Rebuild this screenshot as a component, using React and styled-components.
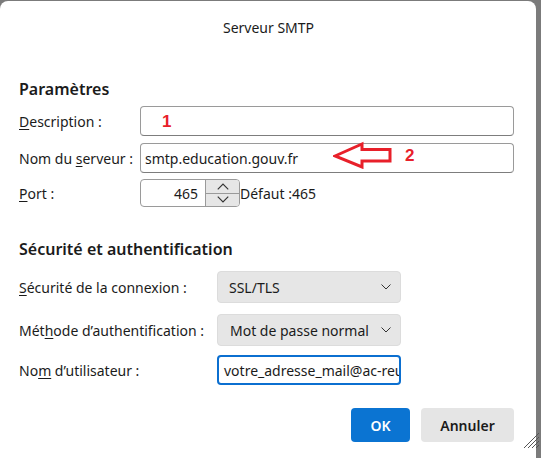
import React from "react";
import styled, { createGlobalStyle } from "styled-components";

const Global = createGlobalStyle`
  html, body { margin: 0; padding: 0; }
  body {
    width: 541px; height: 458px; overflow: hidden;
    background: #7b7b7b;
    font-family: "Noto Sans", "Segoe UI", "Liberation Sans", sans-serif;
    color: #1b1b1b;
  }
`;

const Screen = styled.div`
  display: flex;
  width: 541px;
  height: 458px;
  padding-top: 1px;
  box-sizing: border-box;
`;

const Dialog = styled.div`
  position: relative;
  width: 536px;
  height: 470px;
  background: #fff;
  border-radius: 8px;
  box-sizing: border-box;
  padding: 0 22px 0 19px;
  display: flex;
  flex-direction: column;
`;

const Title = styled.div`
  height: 52px;
  display: flex;
  align-items: center;
  justify-content: center;
  font-size: 14px;
  padding-left: 4px;
`;

const Heading = styled.div`
  font-size: 16px;
  font-weight: 600;
  margin-top: ${(p) => p.$top}px;
  height: 24px;
  line-height: 24px;
`;

const Row = styled.div`
  display: flex;
  align-items: center;
  margin-top: ${(p) => p.$top}px;
  position: relative;
`;

const Label = styled.label`
  width: ${(p) => p.$w}px;
  flex: none;
  font-size: 14px;
  white-space: nowrap;
  u { text-decoration: underline; text-underline-offset: 2px; }
`;

const TextInput = styled.div`
  box-sizing: border-box;
  width: ${(p) => p.$w}px;
  height: 30px;
  border: 1px solid #9a9a9a;
  border-bottom-color: #7d7d7d;
  border-radius: 4px;
  display: flex;
  align-items: center;
  padding-left: 4px;
  font-size: 14px;
  overflow: hidden;
  white-space: nowrap;
`;

const FocusInput = styled(TextInput)`
  border: 2px solid #0b6fd0;
  padding-left: 5px;
`;

const Spin = styled.div`
  box-sizing: border-box;
  width: 100px;
  height: 28px;
  border: 1px solid #9a9a9a;
  border-radius: 4px;
  display: flex;
  overflow: hidden;
`;

const SpinValue = styled.div`
  flex: 1;
  display: flex;
  align-items: center;
  justify-content: flex-end;
  padding-right: 7px;
  font-size: 14px;
`;

const SpinButtons = styled.div`
  width: 33px;
  display: flex;
  flex-direction: column;
  border-left: 1px solid #9a9a9a;
`;

const SpinBtn = styled.div`
  flex: 1;
  background: #e6e6e6;
  display: flex;
  align-items: center;
  justify-content: center;
  & + & { border-top: 1px solid #9a9a9a; }
`;

const Hint = styled.span`
  font-size: 14px;
`;

const Select = styled.div`
  box-sizing: border-box;
  width: 184px;
  height: 32px;
  background: #e6e6e6;
  border: 1px solid #dcdcdc;
  border-radius: 4px;
  display: flex;
  align-items: center;
  justify-content: space-between;
  padding: 0 9px 0 ${(p) => p.$pl}px;
  font-size: 14px;
  white-space: nowrap;
`;

const Footer = styled.div`
  display: flex;
  justify-content: flex-end;
  gap: 11px;
  margin-top: 23px;
`;

const Button = styled.button`
  height: 34px;
  width: ${(p) => p.$w}px;
  border: none;
  border-radius: 4px;
  font-family: inherit;
  font-size: 14px;
  font-weight: 600;
  background: ${(p) => (p.$primary ? "#0b74d2" : "#e5e5e5")};
  color: ${(p) => (p.$primary ? "#fff" : "#1b1b1b")};
`;

const Mark = styled.span`
  position: absolute;
  left: ${(p) => p.$x}px;
  top: ${(p) => p.$y}px;
  color: #e8202a;
  font-weight: 700;
  font-size: 17px;
  font-family: "Liberation Sans", "Noto Sans", sans-serif;
  line-height: 1;
`;

const Arrow = styled.svg`
  position: absolute;
  left: 314px;
  top: -2px;
`;

const Grip = styled.svg`
  position: absolute;
  right: -4px;
  top: 428px;
`;

const Chevron = ({ up, w = 10, h = 6, color = "#333" }) => (
  <svg width={w} height={h} viewBox="0 0 10 6">
    <path
      d={up ? "M0.5 5.5 L5 1 L9.5 5.5" : "M0.5 0.5 L5 5 L9.5 0.5"}
      fill="none"
      stroke={color}
      strokeWidth="1"
    />
  </svg>
);

export default function App() {
  return (
    <>
      <Global />
      <Screen>
        <Dialog>
          <Title>Serveur SMTP</Title>
          <Heading $top={24}>Paramètres</Heading>
          <Row $top={5}>
            <Label $w={121}>
              <u>D</u>escription :
            </Label>
            <TextInput $w={374} />
            <Mark $x={143} $y={7}>1</Mark>
          </Row>
          <Row $top={7}>
            <Label $w={121}>
              Nom du <u>s</u>erveur :
            </Label>
            <TextInput $w={374}>smtp.education.gouv.fr</TextInput>
            <Arrow width="62" height="28" viewBox="0 0 62 28">
              <path
                d="M2 15 L29 3 L29 8.5 L57 8.5 L57 20 L29 20 L29 26 Z"
                fill="none"
                stroke="#e8202a"
                strokeWidth="3"
                strokeLinejoin="miter"
              />
            </Arrow>
            <Mark $x={386} $y={4}>2</Mark>
          </Row>
          <Row $top={6}>
            <Label $w={121}>
              <u>P</u>ort :
            </Label>
            <Spin>
              <SpinValue>465</SpinValue>
              <SpinButtons>
                <SpinBtn>
                  <Chevron up w={12} h={7} />
                </SpinBtn>
                <SpinBtn>
                  <Chevron w={12} h={7} />
                </SpinBtn>
              </SpinButtons>
            </Spin>
            <Hint>Défaut :465</Hint>
          </Row>
          <Heading $top={30}>Sécurité et authentification</Heading>
          <Row $top={10}>
            <Label $w={198}>
              <u>S</u>écurité de la connexion :
            </Label>
            <Select $pl={11}>
              SSL/TLS
              <Chevron />
            </Select>
          </Row>
          <Row $top={11}>
            <Label $w={198}>
              Mét<u>h</u>ode d’authentification :
            </Label>
            <Select $pl={12}>
              Mot de passe normal
              <Chevron />
            </Select>
          </Row>
          <Row $top={9}>
            <Label $w={198}>
              No<u>m</u> d’utilisateur :
            </Label>
            <FocusInput $w={184}>votre_adresse_mail@ac-reunion.fr</FocusInput>
          </Row>
          <Footer>
            <Button $primary $w={59}>OK</Button>
            <Button $w={93}>Annuler</Button>
          </Footer>
          <Grip width="20" height="20" viewBox="0 0 20 20">
            <path
              d="M4 19 L19 4 M8 19 L19 8 M12 19 L19 12 M16 19 L19 16"
              stroke="#555"
              strokeWidth="1"
            />
          </Grip>
        </Dialog>
      </Screen>
    </>
  );
}
